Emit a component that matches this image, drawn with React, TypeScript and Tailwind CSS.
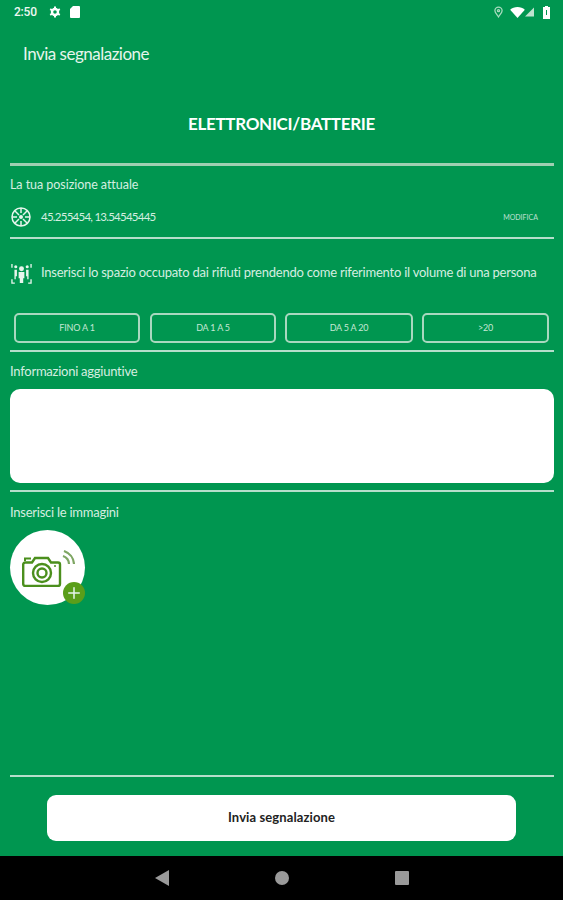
import { Plus } from "lucide-react"

const font = "font-['Lato',sans-serif]"

function Divider({ thick }: { thick?: boolean }) {
  return <div className={thick ? "ml-[10px] mr-[9px] h-[3px] bg-[#9fd0b2]" : "ml-[10px] mr-[9px] h-[2px] bg-[#b5decb]"} />
}

function StatusBar() {
  return (
    <div className="flex h-[24px] items-center justify-between pl-[14px] pr-[13px] text-white">
      <div className="flex items-center">
        <span className="font-['Roboto',sans-serif] text-[12px] font-medium tracking-[-0.2px] text-[#eef8f2]">2:50</span>
        <svg viewBox="0 0 12 12" className="ml-[12px] h-[12px] w-[12px]" fill="none" stroke="white">
          <circle cx="6" cy="6" r="3" strokeWidth="2.4" />
          <path d="M6 0.5v2.5M6 9v2.5M1.2 3.2l2.2 1.3M8.6 7.5l2.2 1.3M10.8 3.2L8.6 4.5M3.4 7.5L1.2 8.8" strokeWidth="2" />
        </svg>
        <svg viewBox="0 0 10 12" className="ml-[9px] h-[12px] w-[10px]" fill="white">
          <path d="M3 0h6a1 1 0 0 1 1 1v10a1 1 0 0 1-1 1H1a1 1 0 0 1-1-1V3z" />
        </svg>
      </div>
      <div className="flex items-center">
        <svg viewBox="0 0 10 13" className="h-[12px] w-[9px]" fill="none" stroke="#a9dcbf" strokeWidth="1.4">
          <path d="M5 12C3 9 1 7 1 5a4 4 0 0 1 8 0c0 2-2 4-4 7z" />
          <circle cx="5" cy="5" r="1.2" />
        </svg>
        <svg viewBox="0 0 16 12" className="ml-[7px] h-[11px] w-[15px]" fill="white">
          <path d="M0 3C4-1 12-1 16 3L8 12z" />
        </svg>
        <svg viewBox="0 0 10 10" className="h-[10px] w-[9px]" fill="#bfe3cf">
          <path d="M10 0v10H0z" />
        </svg>
        <svg viewBox="0 0 7 13" className="ml-[9px] h-[13px] w-[7px]">
          <path d="M2 0h3v1h2v12H0V1h2z" fill="white" />
          <path d="M3 4h1v5H3z" fill="#009650" />
        </svg>
      </div>
    </div>
  )
}

function SizeButton({ label, className }: { label: string; className: string }) {
  return (
    <div className={`flex h-[30px] items-center justify-center rounded-[5px] border-2 border-[#a9d8bf] text-[9px] tracking-[-0.2px] text-[#c5e7d4] ${className}`}>
      {label}
    </div>
  )
}

export default function App() {
  return (
    <div className={`flex h-[900px] w-[563px] flex-col overflow-hidden bg-[#009650] ${font} text-white`}>
      <StatusBar />

      <div className="mt-[18px] h-[24px] pl-[23px] text-[17px] leading-[24px] tracking-[-0.5px] text-[#e6f5ec]">Invia segnalazione</div>

      <h1 className="mt-[47px] h-[22px] text-center text-[17px] font-bold leading-[22px] tracking-[-0.3px]">ELETTRONICI/BATTERIE</h1>

      <div className="mt-[28px]">
        <Divider thick />
      </div>

      <div className="mt-[10px] h-[18px] pl-[10px] text-[12.5px] leading-[18px] tracking-[-0.05px] text-[#d5eee0]">La tua posizione attuale</div>

      {/* posizione */}
      <div className="mt-[11px] flex h-[24px] items-center pl-[11px] pr-[25px]">
        <svg viewBox="0 0 20 20" className="h-[20px] w-[20px]" fill="none" stroke="#e6f5ec" strokeWidth="1.5">
          <circle cx="10" cy="10" r="9" />
          <path d="M10 1v5M10 14v5M1 10h5M14 10h5M4 4l4 4M12 12l4 4M16 4l-4 4M8 12l-4 4" />
          <circle cx="10" cy="10" r="2" fill="#e6f5ec" stroke="none" />
        </svg>
        <span className="ml-[10px] text-[11.5px] tracking-[-0.75px] text-[#d5eee0]">45.255454, 13.54545445</span>
        <span className="ml-auto text-[7px] font-medium text-[#b5decb]">MODIFICA</span>
      </div>

      <div className="mt-[8px]">
        <Divider />
      </div>

      {/* volume */}
      <div className="mt-[22px] flex h-[24px] items-center pl-[11px]">
        <svg viewBox="0 0 22 22" className="h-[23px] w-[21px]" fill="#e6f5ec">
          <circle cx="11" cy="6" r="2.6" />
          <path d="M8 9.5h6V16h-1.2v5H9.2v-5H8z" />
          <circle cx="5" cy="4" r="1.6" />
          <circle cx="17" cy="4" r="1.6" />
          <path d="M3.6 7h2.6v7H5v3H3.6zM15.8 7h2.6v10H17v-3h-1.2z" />
          <path d="M1 5V1M21 1v4M21 17v4h-3M4 21H1v-4" fill="none" stroke="#e6f5ec" strokeWidth="1.4" />
        </svg>
        <span className="ml-[9px] text-[13px] tracking-[-0.23px] text-[#d5eee0]">
          Inserisci lo spazio occupato dai rifiuti prendendo come riferimento il volume di una persona
        </span>
      </div>

      <div className="mt-[28px] flex pl-[14px]">
        <SizeButton label="FINO A 1" className="w-[126px]" />
        <SizeButton label="DA 1 A 5" className="ml-[10px] w-[126px]" />
        <SizeButton label="DA 5 A 20" className="ml-[9px] w-[128px]" />
        <SizeButton label=">20" className="ml-[9px] w-[127px]" />
      </div>

      <div className="mt-[7px]">
        <Divider />
      </div>

      <div className="mt-[10px] h-[18px] pl-[10px] text-[13px] leading-[18px] tracking-[-0.25px] text-[#d5eee0]">Informazioni aggiuntive</div>

      <div className="ml-[10px] mr-[9px] mt-[9px] h-[94px] rounded-[10px] bg-white" />

      <div className="mt-[7px]">
        <Divider />
      </div>

      <div className="mt-[11px] h-[18px] pl-[10px] text-[13px] leading-[18px] tracking-[-0.25px] text-[#d5eee0]">Inserisci le immagini</div>

      {/* aggiungi immagine */}
      <div className="relative ml-[10px] mt-[9px] flex h-[75px] w-[75px] items-center justify-center rounded-full bg-white">
        <svg viewBox="0 0 53 37" className="ml-[2px] mt-[2px] h-[37px] w-[53px]" fill="none" stroke="#4b8f1d" strokeWidth="2.4">
          <path d="M1.2 34V14.5a2 2 0 0 1 2-2H10l3-4.5h13l3 4.5h7a2 2 0 0 1 2 2V34a2 2 0 0 1-2 2H3.2a2 2 0 0 1-2-2z" />
          <path d="M3 11V8.5h6" strokeWidth="2" />
          <circle cx="20" cy="23" r="9" />
          <circle cx="20" cy="23" r="4.5" />
          <circle cx="33" cy="16" r="1" fill="#4b8f1d" stroke="none" />
          <path d="M41 6a9 9 0 0 1 6 8M42 1a15 15 0 0 1 10 13" strokeWidth="2.2" stroke="#7ea663" />
        </svg>
        <div className="absolute left-[53px] top-[52px] flex h-[22px] w-[22px] items-center justify-center rounded-full bg-[#5a9e1a]">
          <Plus className="h-[18px] w-[18px] text-[#e6f5ec]" strokeWidth={2} />
        </div>
      </div>

      <div className="mt-auto">
        <Divider />
      </div>

      <div className="mx-[47px] mb-[15px] mt-[18px] flex h-[46px] items-center justify-center rounded-[9px] bg-white text-[13px] font-bold tracking-[0.1px] text-[#222]">
        Invia segnalazione
      </div>

      {/* barra android */}
      <div className="flex h-[44px] items-center justify-center bg-black">
        <svg viewBox="0 0 14 16" className="mr-[106px] h-[16px] w-[14px]" fill="#9a9a9a">
          <path d="M14 0v16L0 8z" />
        </svg>
        <div className="mr-[106px] h-[14px] w-[14px] rounded-full bg-[#9a9a9a]" />
        <div className="h-[14px] w-[14px] rounded-[1px] bg-[#9a9a9a]" />
      </div>
    </div>
  )
}
